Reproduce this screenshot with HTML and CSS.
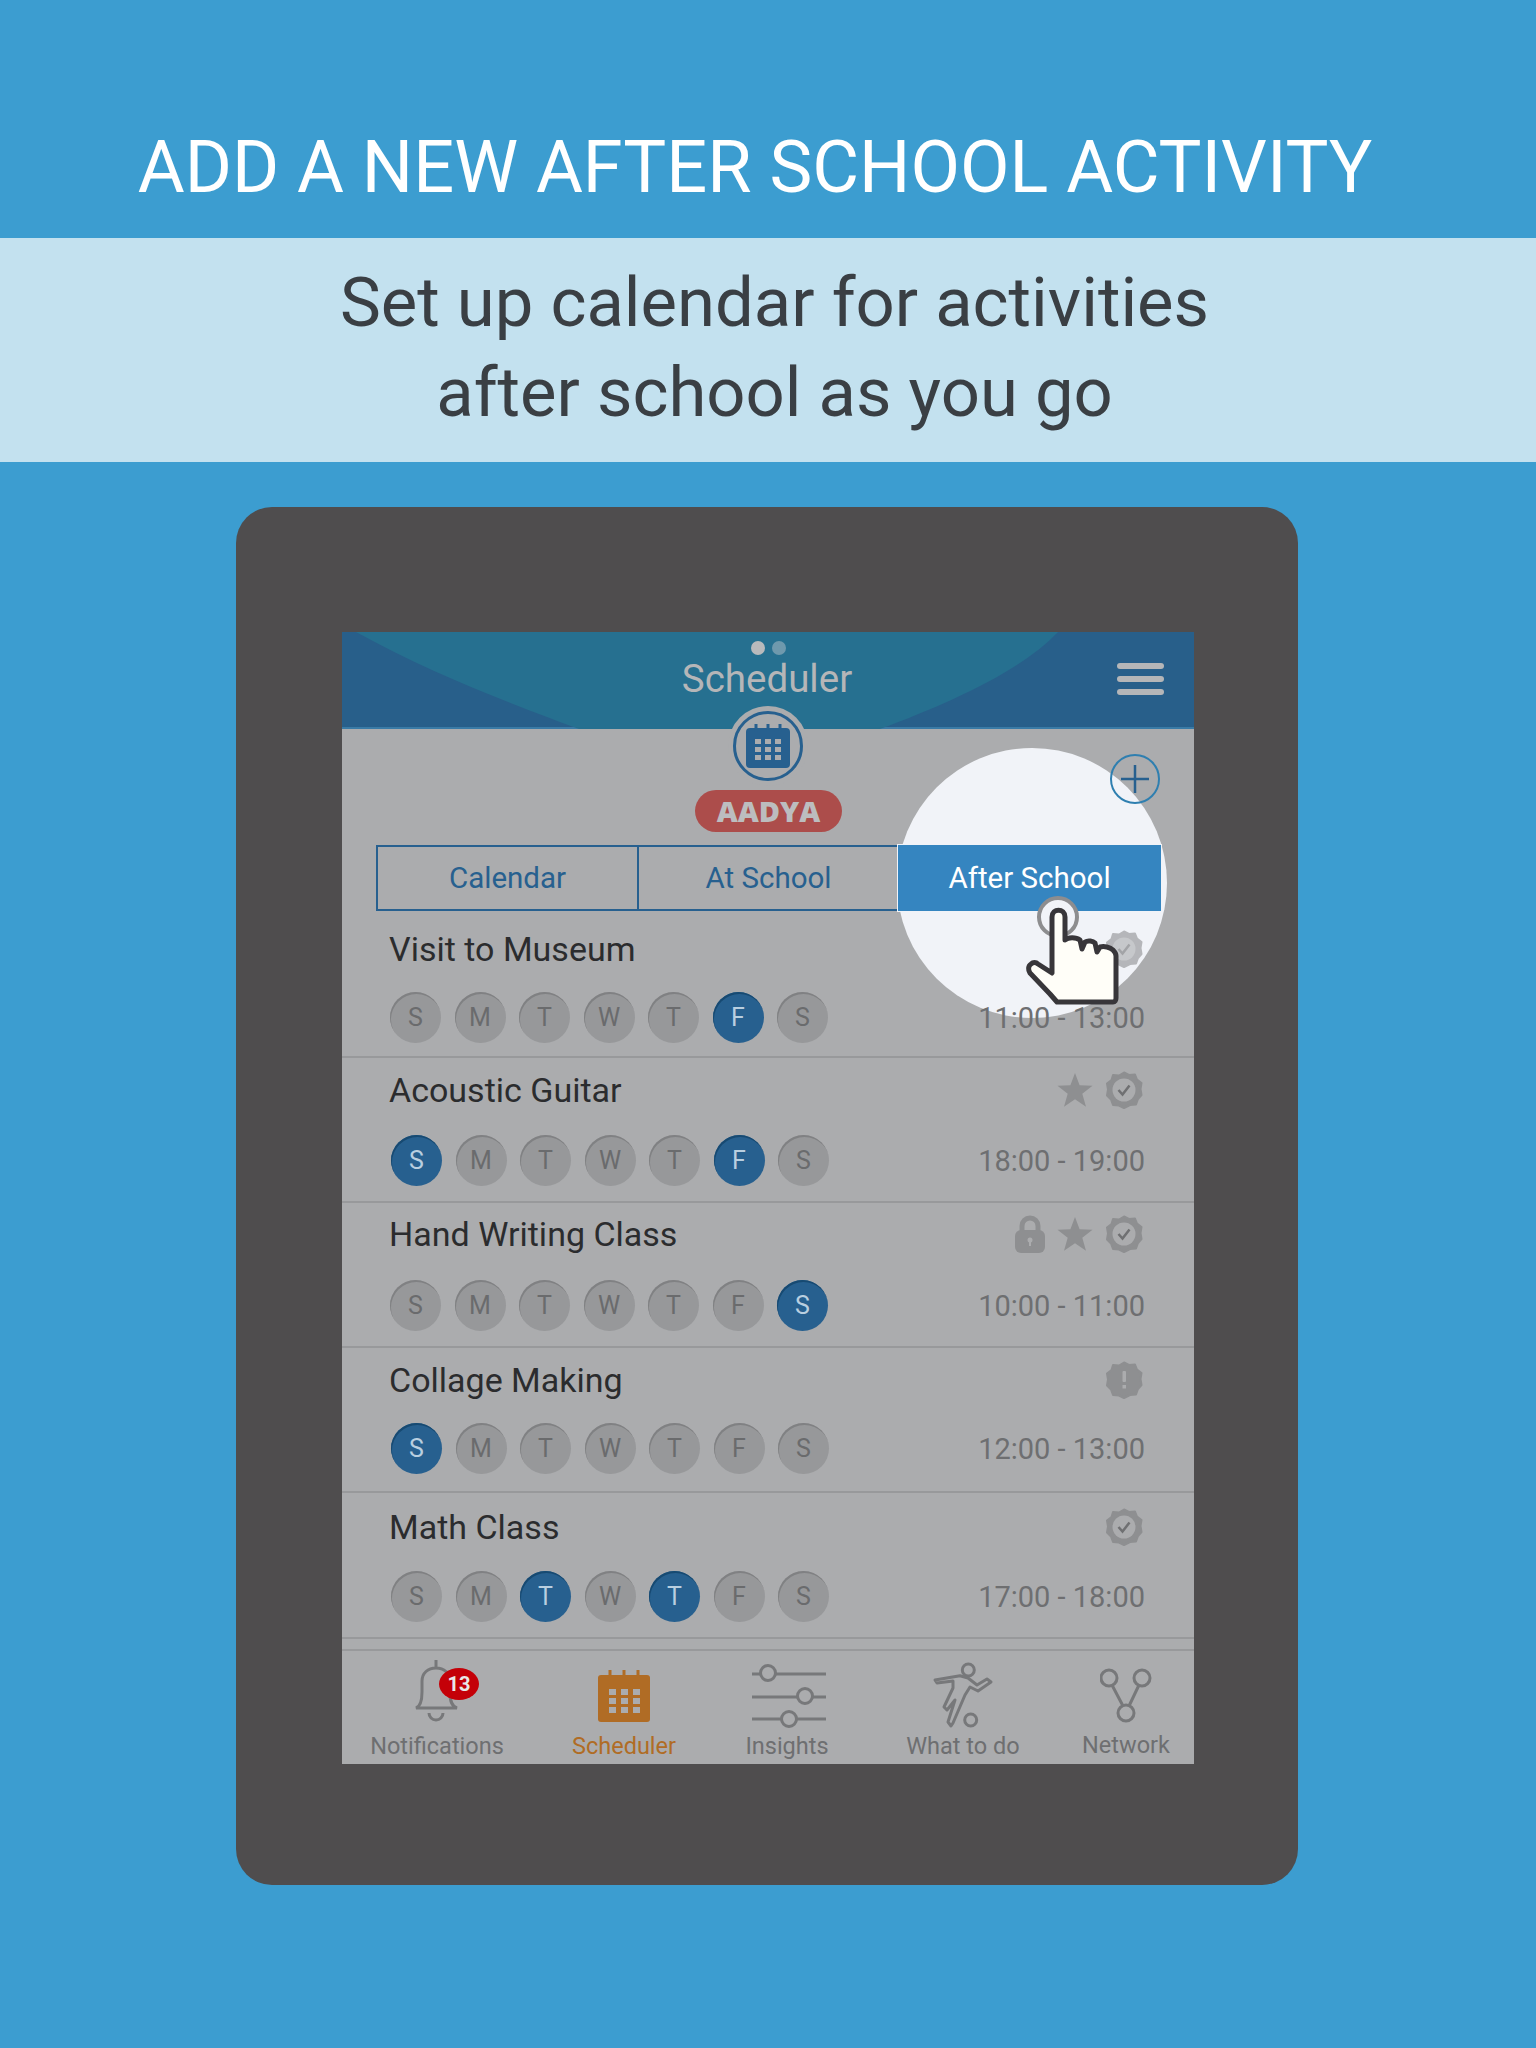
FILE: index.html
```html
<!DOCTYPE html>
<html lang="en">
<head>
    <meta charset="UTF-8">
    <meta name="viewport" content="width=device-width, initial-scale=1.0">
    <title>Add a new after school activity</title>
    <link rel="stylesheet" href="styles.css">
</head>
<body>

<svg class="defs" width="0" height="0">
    <defs>
        <symbol id="star" viewBox="0 0 36 36">
            <path d="M18 1l4.600 12.300 12.900.4-10.200 8 3.700 13-11-7.500-11 7.500 3.700-13-10.200-8 12.900-.4z" fill="#8e8f91"/>
        </symbol>
        <symbol id="seal" viewBox="0 0 38 38">
            <path d="M19 1.500l5 2.500 6-.5 2 5 4.500 3.500-1 6 1 6-3.500 4-2 5.500-6 .5-6 3-5-2.500-6-.5-2-5.500-4-4 1-6-1-6 4.500-3.500 1.500-5 6 .5z" fill="#8e8f91" stroke="#8e8f91" stroke-width="2" stroke-linejoin="round"/>
        </symbol>
        <symbol id="check" viewBox="0 0 38 38">
            <use href="#seal"/>
            <circle cx="19" cy="19" r="11.500" fill="#abacae"/>
            <path d="M13.500 19l4 4.500 7-9" fill="none" stroke="#6f7072" stroke-width="2.500"/>
        </symbol>
    </defs>
</svg>

<header class="headline">ADD A NEW AFTER SCHOOL ACTIVITY</header>
<div class="subline">Set up calendar for activities<br>after school as you go</div>

<div class="device">
    <div class="screen">
        <div class="spot"></div>

        <div class="topbar">
            <svg class="topbar-bg" width="852" height="97" viewBox="0 0 852 97">
                <path d="M14 0C90 42 170 72 237 97H538C610 70 680 38 716 0z" fill="#267090"/>
            </svg>
            <div class="dots"><span class="dot"></span><span class="dot dot-off"></span></div>
            <div class="topbar-title">Scheduler</div>
            <div class="burger"><span></span><span></span><span></span></div>
        </div>

        <div class="child-area">
            <div class="medal">
                <svg width="46" height="44" viewBox="0 0 46 44">
                    <rect x="1" y="4" width="44" height="40" rx="4" fill="#27608f"/>
                    <path d="M11 0v8M23 0v8M35 0v8" stroke="#27608f" stroke-width="3"/>
                    <g fill="#abacae">
                        <rect x="10" y="15" width="6" height="5"/><rect x="20" y="15" width="6" height="5"/><rect x="30" y="15" width="6" height="5"/>
                        <rect x="10" y="23" width="6" height="5"/><rect x="20" y="23" width="6" height="5"/><rect x="30" y="23" width="6" height="5"/>
                        <rect x="10" y="31" width="6" height="5"/><rect x="20" y="31" width="6" height="5"/><rect x="30" y="31" width="6" height="5"/>
                    </g>
                </svg>
            </div>
            <div class="pill">AADYA</div>
            <div class="add">
                <svg width="28" height="28" viewBox="0 0 28 28"><path d="M14 0v28M0 14h28" stroke="#27608f" stroke-width="2.500"/></svg>
            </div>
        </div>

        <div class="tabs">
            <div class="tab">Calendar</div>
            <div class="tab">At School</div>
            <div class="tab tab-on">After School</div>
        </div>

        <div class="rows">
            <div class="row">
                <div class="row-top">
                    <div class="row-name">Visit to Museum</div>
                    <div class="row-icons"><svg class="seal-faded" width="38" height="38"><use href="#check"/></svg></div>
                </div>
                <div class="row-bottom">
                    <div class="days">
                        <span class="day">S</span><span class="day">M</span><span class="day">T</span><span class="day">W</span><span class="day">T</span><span class="day day-on">F</span><span class="day">S</span>
                    </div>
                    <div class="time">11:00 - 13:00</div>
                </div>
            </div>

            <div class="row">
                <div class="row-top">
                    <div class="row-name">Acoustic Guitar</div>
                    <div class="row-icons">
                        <svg width="36" height="36"><use href="#star"/></svg>
                        <svg width="38" height="38"><use href="#check"/></svg>
                    </div>
                </div>
                <div class="row-bottom">
                    <div class="days">
                        <span class="day day-on">S</span><span class="day">M</span><span class="day">T</span><span class="day">W</span><span class="day">T</span><span class="day day-on">F</span><span class="day">S</span>
                    </div>
                    <div class="time">18:00 - 19:00</div>
                </div>
            </div>

            <div class="row">
                <div class="row-top">
                    <div class="row-name">Hand Writing Class</div>
                    <div class="row-icons">
                        <svg width="30" height="38" viewBox="0 0 30 38">
                            <path d="M7 17V11a8 8 0 0 1 16 0v6" fill="none" stroke="#8e8f91" stroke-width="5"/>
                            <rect y="15" width="30" height="23" rx="6" fill="#8e8f91"/>
                            <circle cx="15" cy="25" r="2.500" fill="#abacae"/>
                            <rect x="14" y="25" width="2" height="6" fill="#abacae"/>
                        </svg>
                        <svg width="36" height="36"><use href="#star"/></svg>
                        <svg width="38" height="38"><use href="#check"/></svg>
                    </div>
                </div>
                <div class="row-bottom">
                    <div class="days">
                        <span class="day">S</span><span class="day">M</span><span class="day">T</span><span class="day">W</span><span class="day">T</span><span class="day">F</span><span class="day day-on">S</span>
                    </div>
                    <div class="time">10:00 - 11:00</div>
                </div>
            </div>

            <div class="row">
                <div class="row-top">
                    <div class="row-name">Collage Making</div>
                    <div class="row-icons">
                        <svg width="38" height="38" viewBox="0 0 38 38">
                            <use href="#seal"/>
                            <rect x="17.500" y="10" width="3.500" height="11" rx="1" fill="#abacae"/>
                            <rect x="17.500" y="24" width="3.500" height="3.500" fill="#abacae"/>
                        </svg>
                    </div>
                </div>
                <div class="row-bottom">
                    <div class="days">
                        <span class="day day-on">S</span><span class="day">M</span><span class="day">T</span><span class="day">W</span><span class="day">T</span><span class="day">F</span><span class="day">S</span>
                    </div>
                    <div class="time">12:00 - 13:00</div>
                </div>
            </div>

            <div class="row">
                <div class="row-top">
                    <div class="row-name">Math Class</div>
                    <div class="row-icons"><svg width="38" height="38"><use href="#check"/></svg></div>
                </div>
                <div class="row-bottom">
                    <div class="days">
                        <span class="day">S</span><span class="day">M</span><span class="day day-on">T</span><span class="day">W</span><span class="day day-on">T</span><span class="day">F</span><span class="day">S</span>
                    </div>
                    <div class="time">17:00 - 18:00</div>
                </div>
            </div>
        </div>

        <nav class="nav">
            <div class="nav-item">
                <div class="nav-icon nav-icon-bell">
                    <svg width="46" height="64" viewBox="0 0 46 64">
                        <path d="M22 9V1M2 49c5-2 6-8 6-16V22c0-8 6-13 14-13s14 5 14 13v11c0 8 1 14 7 16zM15 54a7 7 0 0 0 14 0" fill="none" stroke="#77787a" stroke-width="3"/>
                    </svg>
                    <span class="bell-count">13</span>
                </div>
                <div class="nav-label">Notifications</div>
            </div>
            <div class="nav-item nav-item-on">
                <div class="nav-icon nav-icon-cal">
                    <svg width="52" height="52" viewBox="0 0 52 52">
                        <rect y="5" width="52" height="47" rx="3" fill="#b06c25"/>
                        <path d="M12 0v8M26 0v8M40 0v8" stroke="#b06c25" stroke-width="3"/>
                        <g fill="#abacae">
                            <rect x="11" y="19" width="7" height="6"/><rect x="23" y="19" width="7" height="6"/><rect x="35" y="19" width="7" height="6"/>
                            <rect x="11" y="28" width="7" height="6"/><rect x="23" y="28" width="7" height="6"/><rect x="35" y="28" width="7" height="6"/>
                            <rect x="11" y="37" width="7" height="6"/><rect x="23" y="37" width="7" height="6"/><rect x="35" y="37" width="7" height="6"/>
                        </g>
                    </svg>
                </div>
                <div class="nav-label">Scheduler</div>
            </div>
            <div class="nav-item">
                <div class="nav-icon nav-icon-sliders">
                    <svg width="76" height="66" viewBox="0 0 76 66">
                        <g fill="#abacae" stroke="#77787a" stroke-width="3">
                            <path d="M1 10h74M1 33h74M1 55h74"/>
                            <circle cx="17" cy="9" r="7.500"/>
                            <circle cx="54" cy="32" r="7.500"/>
                            <circle cx="38" cy="55" r="7.500"/>
                        </g>
                    </svg>
                </div>
                <div class="nav-label">Insights</div>
            </div>
            <div class="nav-item">
                <div class="nav-icon nav-icon-player">
                    <svg width="90" height="80" viewBox="0 0 90 80">
                        <g fill="none" stroke="#77787a" stroke-width="3" stroke-linejoin="round">
                            <circle cx="48.300" cy="15" r="6"/>
                            <circle cx="50.700" cy="65" r="6"/>
                            <path d="M15 25L40 20.700L48 23L57 30L67 24L71 27L58 36L50 32L45 40L33 68L31 71L28 67L35 45L27 55L24 52L33 33L33 26L17 28z"/>
                        </g>
                    </svg>
                </div>
                <div class="nav-label">What to do</div>
            </div>
            <div class="nav-item">
                <div class="nav-icon nav-icon-network">
                    <svg width="52" height="62" viewBox="0 0 52 62">
                        <g fill="none" stroke="#77787a" stroke-width="3">
                            <circle cx="9" cy="14" r="8"/>
                            <circle cx="42" cy="14" r="8"/>
                            <circle cx="26" cy="49" r="8"/>
                            <path d="M12 21l11 21M39 21L29 42"/>
                        </g>
                    </svg>
                </div>
                <div class="nav-label nav-label-up">Network</div>
            </div>
        </nav>

        <div class="hand">
            <svg width="110" height="120" viewBox="0 0 110 120">
                <circle cx="38" cy="22" r="19" fill="#f1f3f8" stroke="#8d8d8f" stroke-width="4"/>
                <path d="M32 78V22c0-9 13-9 13 0v23c3-3 11-3 15 0l2 9 3-7c3-2 8-1 10 1l2 9 3-5c4-1 10 0 13 3 2 2 3 4 3 6v42c0 2-1 4-3 4H37l-7-8-20-21c-2-3-2-7 1-9 2-2 5-2 7 0z" fill="#fffef8" stroke="#38363a" stroke-width="5" stroke-linejoin="round"/>
            </svg>
        </div>
    </div>
</div>

</body>
</html>
```

FILE: styles.css
```css
* {
    box-sizing: border-box;
}
body {
    margin: 0;
    width: 1536px;
    height: 2048px;
    overflow: hidden;
    background-color: #3c9dd0;
    font-family: Roboto, "Liberation Sans", sans-serif;
}
.defs {
    display: block;
    height: 0;
}
.headline {
    height: 238px;
    padding: 126px 26px 0 0;
    text-align: center;
    color: white;
    font-size: 72px;
    line-height: 84px;
}
.subline {
    height: 224px;
    padding: 20px 0 0 13px;
    text-align: center;
    background: #c3e1ef;
    color: #3a3f44;
    font-size: 68.800px;
    line-height: 90px;
}
.device {
    width: 1062px;
    height: 1378px;
    margin: 45px 0 0 236px;
    padding: 125px 104px 0 106px;
    background: #4f4d4e;
    border-radius: 36px;
}

/* screen, drawn in its dimmed colours */
.screen {
    position: relative;
    width: 852px;
    height: 1132px;
    background: #abacae;
    overflow: hidden;
}
.spot {
    position: absolute;
    left: 555px;
    top: 116px;
    width: 270px;
    height: 270px;
    border-radius: 50%;
    background: #f1f3f8;
}
.topbar {
    position: relative;
    height: 97px;
    background: #285f8a;
    border-bottom: 2px solid #3a7ba6;
    text-align: center;
}
.topbar-bg {
    position: absolute;
    left: 0;
    top: 0;
}
.dots {
    position: relative;
    display: flex;
    justify-content: center;
    gap: 7px;
    padding: 9px 0 0 0;
    margin-left: 1px;
}
.dot {
    width: 14px;
    height: 14px;
    border-radius: 50%;
    background: #b9babc;
}
.dot-off {
    background: #6f99ad;
}
.topbar-title {
    position: relative;
    margin: 1px 0 0 0;
    padding-right: 2px;
    color: #b5b6b8;
    font-size: 38.500px;
    line-height: 46px;
}
.burger {
    position: absolute;
    left: 775px;
    top: 31px;
    width: 47px;
    display: flex;
    flex-direction: column;
    gap: 7px;
}
.burger span {
    height: 6px;
    border-radius: 3px;
    background: #b5b6b8;
}
.child-area {
    position: relative;
    height: 116px;
}
.medal {
    position: absolute;
    left: 391px;
    top: -18px;
    width: 70px;
    height: 70px;
    display: flex;
    align-items: center;
    justify-content: center;
    border-radius: 50%;
    border: 3px solid #27608f;
    background: #abacae;
    box-shadow: 0 0 0 5px #abacae;
}
.pill {
    position: absolute;
    left: 353px;
    top: 61px;
    width: 147px;
    height: 42px;
    border-radius: 21px;
    background: #ac4d4b;
    color: #bcbdbf;
    font-family: "Open Sans", sans-serif;
    font-size: 29px;
    font-weight: 800;
    line-height: 42px;
    text-align: center;
}
.add {
    position: absolute;
    z-index: 2;
    left: 768px;
    top: 25px;
    width: 50px;
    height: 50px;
    display: flex;
    align-items: center;
    justify-content: center;
    border-radius: 50%;
    border: 2px solid #2f7fb0;
}
.tabs {
    position: relative;
    z-index: 2;
    display: grid;
    grid-template-columns: 261px 261px 263px;
    grid-template-rows: 66px;
    width: 785px;
    height: 66px;
    margin-left: 34px;
}
.tab {
    border: 2px solid #27608f;
    border-right: 0;
    color: #27608f;
    font-size: 29.500px;
    line-height: 63px;
    text-align: center;
}
.tab-on {
    background: #3585c0;
    border: 0;
    color: white;
    line-height: 67px;
    box-shadow: 0 0 0 1px #f1f3f8;
}
.row {
    height: 145px;
    padding: 12px 49px 0 49px;
    border-bottom: 2px solid #98999b;
}
.row-top {
    display: flex;
    justify-content: space-between;
    align-items: center;
    height: 40px;
}
.row-name {
    margin-left: -2px;
    color: #2b2c2e;
    font-size: 34px;
    line-height: 40px;
}
.row-icons {
    display: flex;
    align-items: center;
    gap: 12px;
    margin-right: 2px;
}
.row-bottom {
    display: flex;
    justify-content: space-between;
    align-items: center;
    margin-top: 25px;
}
.row:nth-child(1) {
    height: 147px;
    padding-top: 18px;
}
.row:nth-child(1) .row-bottom {
    margin-top: 23px;
}
.row:nth-child(3) {
    padding-top: 11px;
}
.row:nth-child(3) .row-bottom {
    margin-top: 26px;
}
.row:nth-child(4) {
    padding-top: 12px;
}
.row:nth-child(4) .row-bottom {
    margin-top: 23px;
}
.row:nth-child(5) {
    height: 146px;
    padding-top: 14px;
}
.row:nth-child(5) .row-bottom {
    margin-top: 24px;
}
.row:nth-child(odd):not(:last-child) .days {
    margin-left: -1px;
}
.days {
    display: flex;
    gap: 13.500px;
}
.day {
    width: 51px;
    height: 51px;
    border-radius: 50%;
    background: #97989a;
    box-shadow: inset 1px 2px 0 #808183;
    color: #6a6b6d;
    font-size: 25px;
    line-height: 51px;
    text-align: center;
}
.day-on {
    background: #27608f;
    box-shadow: inset 1px 2px 0 #174a72;
    color: #b9cfe0;
}
.time {
    position: relative;
    z-index: 2;
    color: #6e6f71;
    font-size: 29px;
}
.seal-faded {
    position: relative;
    z-index: 2;
    opacity: 0.6;
}
.nav {
    position: absolute;
    left: 0;
    top: 1017px;
    width: 852px;
    height: 115px;
    display: grid;
    grid-template-columns: 190px 184px 142px 210px 116px;
    background: #abacae;
    border-top: 2px solid #98999b;
}
.nav-item {
    display: flex;
    flex-direction: column;
    align-items: center;
}
.nav-icon {
    position: relative;
    height: 76px;
}
.nav-icon svg {
    display: block;
}
.nav-icon-bell {
    padding-top: 8px;
}
.nav-icon-cal {
    padding-top: 19px;
}
.nav-icon-sliders {
    padding: 13px 0 0 3px;
}
.nav-icon-player {
    padding: 4px 0 0 4px;
}
.nav-icon-network {
    padding-top: 13px;
}
.bell-count {
    position: absolute;
    left: 25px;
    top: 17px;
    width: 40px;
    height: 32px;
    border-radius: 50%;
    background: #c40008;
    color: #e8e8e8;
    font-size: 20px;
    font-weight: 700;
    line-height: 32px;
    text-align: center;
}
.nav-label {
    color: #6e6f71;
    font-size: 23.500px;
    line-height: 28px;
    margin-top: 5px;
}
.nav-label-up {
    margin-top: 4px;
}
.nav-item-on .nav-label {
    color: #b06c25;
}
.hand {
    position: absolute;
    z-index: 3;
    left: 678px;
    top: 263px;
}
```
